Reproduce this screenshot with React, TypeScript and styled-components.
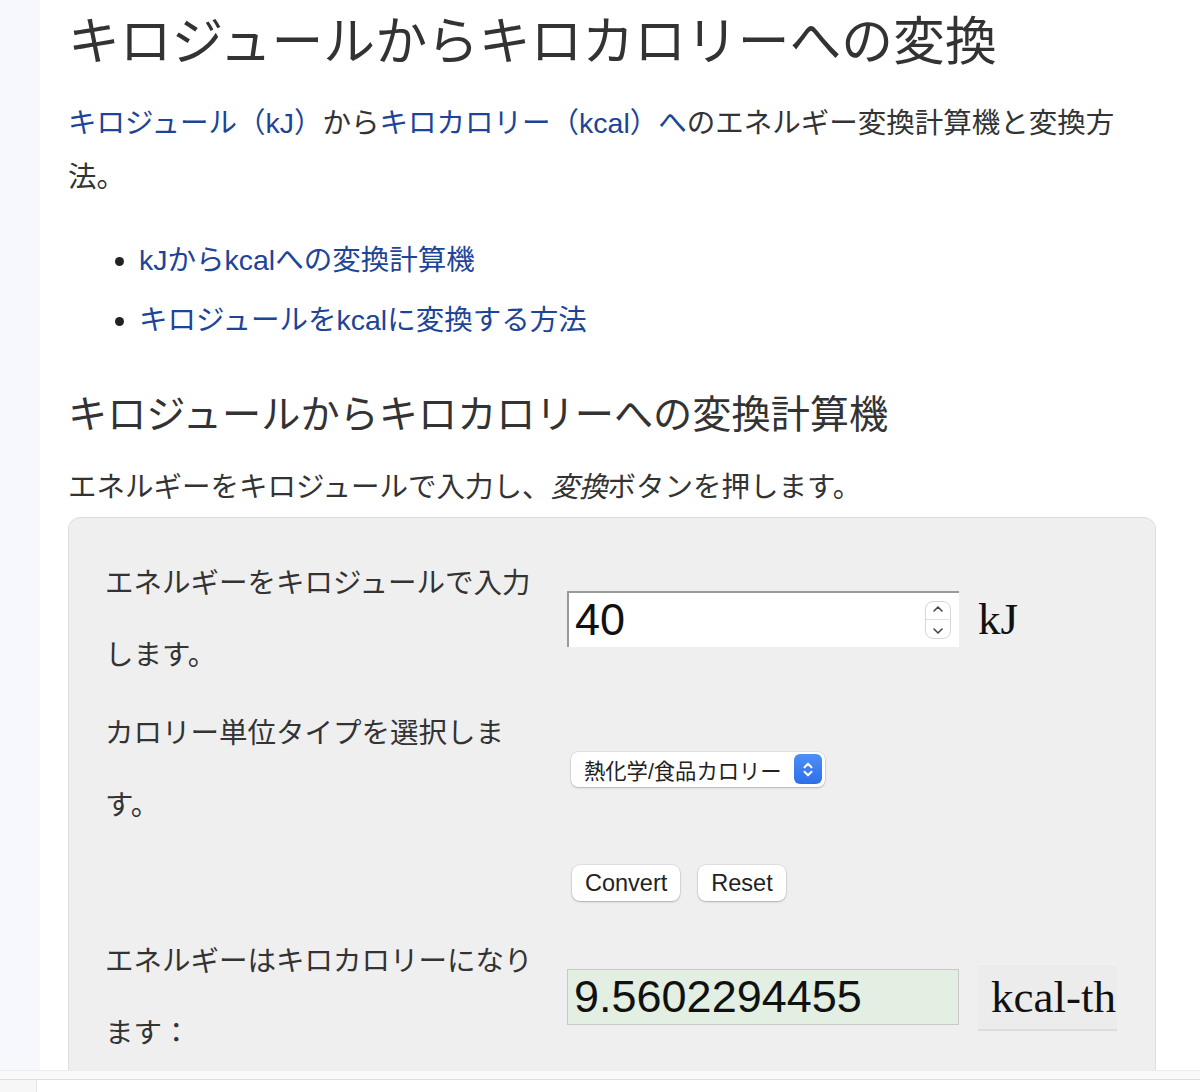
import React from 'react';
import styled, {createGlobalStyle} from 'styled-components';

const GlobalStyle = createGlobalStyle`
  html, body {
    margin: 0;
    padding: 0;
    background: #ffffff;
  }
  body {
    font-family: "Liberation Sans", "Noto Sans CJK JP", sans-serif;
    color: #333333;
  }
`

const jp = `"Liberation Sans", "Noto Sans CJK JP", sans-serif`
const serif = `"Liberation Serif", "Noto Serif CJK JP", serif`

const Page = styled.div`
  height: 1092px;
  overflow: hidden;
  display: grid;
  grid-template-rows: 1070px 22px;
`

const Body = styled.div`
  display: flex;
  overflow: hidden;
`

const LeftRail = styled.div`
  width: 40px;
  flex-shrink: 0;
  background: #f7f8fd;
`

const Main = styled.main`
  flex: 1;
  padding: 0 44px 0 28px;
`

const Title = styled.h1`
  margin: 11px 0 0;
  font-family: ${jp};
  font-size: 51.8px;
  font-weight: 400;
  line-height: 62px;
  color: #333333;
`

const Lead = styled.p`
  margin: 23px 0 0;
  font-size: 28.5px;
  line-height: 54px;
`

const Link = styled.a`
  color: #1d4597;
  text-decoration: none;
`

const TocList = styled.ul`
  margin: 26px 0 0;
  padding-left: 71px;
  list-style: disc;
`

const TocItem = styled.li`
  font-size: 28.5px;
  line-height: 60px;
  &::marker {
    color: #222222;
  }
`

const SubTitle = styled.h2`
  margin: 39px 0 0;
  font-size: 39.2px;
  font-weight: 400;
  line-height: 51px;
  color: #333333;
`

const Intro = styled.p`
  margin: 20px 0 0;
  font-size: 28.5px;
  line-height: 54px;

  em {
    font-style: italic;
  }
`

const Card = styled.div`
  margin-top: 3px;
  background: #efefef;
  border: 1px solid #dcdcdc;
  border-radius: 12px;
  padding: 29px 38px 40px 36px;
`

const FormGrid = styled.div`
  display: grid;
  grid-template-columns: 462px 411px 1fr;
  row-gap: 6px;
  align-items: center;
`

const Label = styled.div`
  width: 436px;
  font-size: 28.5px;
  line-height: 72px;
  min-height: 72px;
`

const FieldCell = styled.div`
  padding-right: 19px;
  position: relative;
`

const NumberInput = styled.input<{ $readOnly?: boolean }>`
  box-sizing: border-box;
  width: 392px;
  height: 56px;
  margin: 0;
  padding: 0 6px;
  font-family: "Liberation Sans", Arial, sans-serif;
  font-size: 45px;
  color: #111111;
  background: ${p => p.$readOnly ? '#e2efe2' : '#ffffff'};
  border: ${p => p.$readOnly ? '1px solid #c9c9c9' : 'none'};
  border-top: ${p => p.$readOnly ? '1px solid #c9c9c9' : '2px solid #9a9a9a'};
  border-left: ${p => p.$readOnly ? '1px solid #c9c9c9' : '2px solid #9a9a9a'};
  outline: none;
`

const Spinner = styled.div`
  position: absolute;
  left: 358px;
  top: 10px;
  width: 24px;
  height: 36px;
  border: 1px solid #d6d6d6;
  border-radius: 8px;
  background: #ffffff;
  display: flex;
  flex-direction: column;
  align-items: center;
  justify-content: space-around;

  svg {
    display: block;
  }
`

const SpinDivider = styled.div`
  width: 100%;
  height: 1px;
  background: #e2e2e2;
`

const Unit = styled.div`
  font-family: ${serif};
  font-size: 45px;
  color: #111111;
`

const UnitBox = styled.div`
  height: 64px;
  padding-left: 13px;
  background: #ececec;
  border-top: 1px solid #f2f2f2;
  border-bottom: 2px solid #dddddd;
  overflow: hidden;
  white-space: nowrap;
  font-family: ${serif};
  font-size: 45px;
  line-height: 64px;
  color: #111111;
`

const SelectBox = styled.div`
  box-sizing: border-box;
  margin-left: 4px;
  width: 254px;
  height: 35px;
  display: flex;
  align-items: center;
  justify-content: space-between;
  padding: 0 3px 0 13px;
  background: #ffffff;
  border-radius: 7px;
  box-shadow: 0 0 0 0.5px rgba(0, 0, 0, 0.12), 0 1px 2px rgba(0, 0, 0, 0.2);
  font-family: ${jp};
  font-size: 21.3px;
  color: #222222;
  white-space: nowrap;
`

const SelectStepper = styled.div`
  width: 28px;
  height: 30px;
  border-radius: 6px;
  background: linear-gradient(#4d8ff8, #2d6fe8);
  display: flex;
  align-items: center;
  justify-content: center;
`

const ButtonRow = styled.div`
  display: flex;
  gap: 18px;
  margin-left: 5px;
`

const Button = styled.button`
  height: 36px;
  padding: 0 13px;
  background: #ffffff;
  border: none;
  border-radius: 8px;
  box-shadow: 0 0 0 0.5px rgba(0, 0, 0, 0.12), 0 1px 2px rgba(0, 0, 0, 0.22);
  font-family: "Liberation Sans", Arial, sans-serif;
  font-size: 23.5px;
  color: #222222;
`

const Footer = styled.div`
  display: grid;
  grid-template-rows: 10px 1fr;
`

const FooterBand = styled.div`
  background: #f9f9f9;
  border-top: 1px solid #ececec;
  border-bottom: 1px solid #dedede;
`

const FooterRow = styled.div`
  display: flex;
`

const FooterCorner = styled.div`
  width: 36px;
  background: #f7f7f7;
  border-right: 1px solid #e4e4e4;
`

const Chevrons = ({color, size}: { color: string, size: number }) => (
  <svg width={size} height={size * 1.5} viewBox="0 0 12 18" fill="none" stroke={color} strokeWidth={1.8}
       strokeLinecap="round" strokeLinejoin="round">
    <path d="M3 7 L6 4 L9 7"/>
    <path d="M3 11 L6 14 L9 11"/>
  </svg>
)

const SpinArrow = ({up}: { up: boolean }) => (
  <svg width={12} height={8} viewBox="0 0 12 8" fill="none" stroke="#444" strokeWidth={1.6}
       strokeLinecap="round" strokeLinejoin="round">
    <path d={up ? "M2 6 L6 2 L10 6" : "M2 2 L6 6 L10 2"}/>
  </svg>
)

const App = () => {
  return (
    <Page>
      <GlobalStyle/>
      <Body>
        <LeftRail/>
        <Main>
          <Title>キロジュールからキロカロリーへの変換</Title>
          <Lead>
            <Link href="#">キロジュール（kJ）</Link>から<Link href="#">キロカロリー（kcal）へ</Link>のエネルギー変換計算機と変換方法。
          </Lead>
          <TocList>
            <TocItem><Link href="#">kJからkcalへの変換計算機</Link></TocItem>
            <TocItem><Link href="#">キロジュールをkcalに変換する方法</Link></TocItem>
          </TocList>
          <SubTitle>キロジュールからキロカロリーへの変換計算機</SubTitle>
          <Intro>エネルギーをキロジュールで入力し、<em>変換</em>ボタンを押します。</Intro>
          <Card>
            <FormGrid>
              <Label>エネルギーをキロジュールで入力します。</Label>
              <FieldCell>
                <NumberInput defaultValue="40"/>
                <Spinner>
                  <SpinArrow up/>
                  <SpinDivider/>
                  <SpinArrow up={false}/>
                </Spinner>
              </FieldCell>
              <Unit>kJ</Unit>

              <Label>カロリー単位タイプを選択します。</Label>
              <FieldCell>
                <SelectBox>
                  <span>熱化学/食品カロリー</span>
                  <SelectStepper><Chevrons color="#ffffff" size={14}/></SelectStepper>
                </SelectBox>
              </FieldCell>
              <div/>

              <Label/>
              <FieldCell>
                <ButtonRow>
                  <Button>Convert</Button>
                  <Button>Reset</Button>
                </ButtonRow>
              </FieldCell>
              <div/>

              <Label>エネルギーはキロカロリーになります：</Label>
              <FieldCell>
                <NumberInput $readOnly readOnly defaultValue="9.5602294455"/>
              </FieldCell>
              <UnitBox>kcal-thermochemical</UnitBox>
            </FormGrid>
          </Card>
        </Main>
      </Body>
      <Footer>
        <FooterBand/>
        <FooterRow>
          <FooterCorner/>
        </FooterRow>
      </Footer>
    </Page>
  );
};

export default App;
